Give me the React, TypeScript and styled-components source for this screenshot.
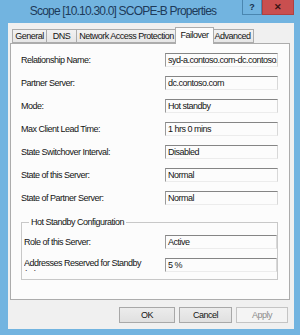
import React from 'react';
import styled, { createGlobalStyle } from 'styled-components';

const GlobalStyle = createGlobalStyle`
  html, body {
    margin: 0;
    padding: 0;
    background: #72b4e0;
  }
`;

const uiFont = `"Liberation Sans", Arial, sans-serif`;

const Window = styled.div`
  width: 300px;
  height: 335px;
  box-sizing: border-box;
  background: #72b4e0;
  display: flex;
  flex-direction: column;
  padding-bottom: 6px;
  font-family: ${uiFont};
`;

const TitleBar = styled.div`
  height: 23px;
  display: flex;
  align-items: flex-start;
  padding-right: 6px;
`;

const Title = styled.div`
  flex: 1;
  text-align: center;
  font-size: 12px;
  letter-spacing: -0.8px;
  line-height: 22px;
  color: #1d3a5a;
  padding-left: 4px;
`;

const CaptionButton = styled.div<{ $close?: boolean }>`
  width: ${(p) => (p.$close ? '32px' : '20px')};
  height: 15px;
  box-sizing: border-box;
  display: flex;
  align-items: center;
  justify-content: center;
  background: ${(p) => (p.$close ? '#c94f4f' : '#72b4e0')};
  border: 1px solid ${(p) => (p.$close ? '#b04040' : '#4a86b0')};
  border-top: none;
  color: ${(p) => (p.$close ? '#3a1414' : '#17304f')};
  font-size: 9px;
  font-weight: bold;
`;

const Client = styled.div`
  flex: 1;
  margin: 0 6px 0 8px;
  background: #f0f0f0;
  display: flex;
  flex-direction: column;
  padding-top: 4px;
  font-size: 9px;
  letter-spacing: -0.5px;
  color: #141414;
`;

const TabStrip = styled.div`
  display: flex;
  align-items: flex-end;
  height: 16px;
  padding-left: 4px;
  position: relative;
  z-index: 1;
`;

const Tab = styled.div<{ $w: number; $active?: boolean }>`
  width: ${(p) => p.$w}px;
  height: ${(p) => (p.$active ? '17px' : '14px')};
  box-sizing: border-box;
  border: 1px solid #acacac;
  border-bottom: ${(p) => (p.$active ? 'none' : '1px solid #acacac')};
  margin: ${(p) => (p.$active ? '0 -2px -1px -2px' : '0 0 0 -1px')};
  background: ${(p) => (p.$active ? '#fcfcfc' : 'linear-gradient(#f2f2f2, #e6e6e6)')};
  line-height: ${(p) => (p.$active ? '14px' : '12px')};
  text-align: center;
  white-space: nowrap;
  position: relative;
  z-index: ${(p) => (p.$active ? 2 : 0)};

  &:first-child {
    margin-left: 0;
  }
`;

const Panel = styled.div`
  margin-left: 2px;
  width: 280px;
  height: 257px;
  box-sizing: border-box;
  border: 1px solid #acacac;
  background: #fcfcfc;
  padding: 9px 11px 0 10px;
`;

const Row = styled.div`
  display: flex;
  align-items: center;
  height: 14px;
  margin-bottom: 9px;

  &:last-child {
    margin-bottom: 0;
  }
`;

const Label = styled.div<{ $w: number }>`
  width: ${(p) => p.$w}px;
  flex-shrink: 0;
  line-height: 12px;
  white-space: nowrap;
`;

const WrapLabel = styled(Label)`
  white-space: normal;
  height: 13px;
  line-height: 11px;
  overflow: hidden;
  align-self: flex-start;
  padding-right: 14px;
  box-sizing: border-box;
`;

const Field = styled.div`
  flex: 1;
  height: 14px;
  box-sizing: border-box;
  border-top: 1px solid #858585;
  border-left: 1px solid #9a9a9a;
  border-right: 1px solid #d8d8d8;
  border-bottom: 1px solid #ececec;
  padding-left: 2px;
  line-height: 12px;
  white-space: nowrap;
  overflow: hidden;
`;

const Group = styled.fieldset`
  margin: 11px 0 0 0;
  padding: 7px 0 7px 2px;
  border: 1px solid #c8c8c8;
  border-radius: 0;
  min-width: 0;
`;

const Legend = styled.legend`
  margin-left: 5px;
  padding: 0 2px;
  line-height: 12px;
`;

const Buttons = styled.div`
  display: flex;
  justify-content: flex-end;
  gap: 4px;
  margin-top: 7px;
  padding-right: 6px;
`;

const Button = styled.div<{ $w: number; $disabled?: boolean }>`
  width: ${(p) => p.$w}px;
  height: 16px;
  box-sizing: border-box;
  border: 1px solid ${(p) => (p.$disabled ? '#c4c4c4' : '#a8a8a8')};
  background: ${(p) => (p.$disabled ? '#f4f4f4' : 'linear-gradient(#ececec, #e0e0e0)')};
  color: ${(p) => (p.$disabled ? '#8c8c8c' : '#141414')};
  line-height: 14px;
  text-align: center;
`;

const rows = [
  ['Relationship Name:', 'syd-a.contoso.com-dc.contoso.com'],
  ['Partner Server:', 'dc.contoso.com'],
  ['Mode:', 'Hot standby'],
  ['Max Client Lead Time:', '1 hrs 0 mins'],
  ['State Switchover Interval:', 'Disabled'],
  ['State of this Server:', 'Normal'],
  ['State of Partner Server:', 'Normal'],
];

const tabs = [
  { name: 'General', w: 35 },
  { name: 'DNS', w: 31 },
  { name: 'Network Access Protection', w: 101 },
  { name: 'Failover', w: 39, active: true },
  { name: 'Advanced', w: 43 },
];

export default function App() {
  return (
    <>
      <GlobalStyle />
      <Window>
        <TitleBar>
          <Title>Scope [10.10.30.0] SCOPE-B Properties</Title>
          <CaptionButton>?</CaptionButton>
          <CaptionButton $close>✕</CaptionButton>
        </TitleBar>
        <Client>
          <TabStrip>
            {tabs.map((t) => (
              <Tab key={t.name} $w={t.w} $active={t.active}>
                {t.name}
              </Tab>
            ))}
          </TabStrip>
          <Panel>
            {rows.map(([label, value]) => (
              <Row key={label}>
                <Label $w={144}>{label}</Label>
                <Field>{value}</Field>
              </Row>
            ))}
            <Group>
              <Legend>Hot Standby Configuration</Legend>
              <Row>
                <Label $w={141}>Role of this Server:</Label>
                <Field>Active</Field>
              </Row>
              <Row>
                <WrapLabel $w={141}>Addresses Reserved for Standby (%):</WrapLabel>
                <Field>5 %</Field>
              </Row>
            </Group>
          </Panel>
          <Buttons>
            <Button $w={56}>OK</Button>
            <Button $w={53}>Cancel</Button>
            <Button $w={52} $disabled>
              Apply
            </Button>
          </Buttons>
        </Client>
      </Window>
    </>
  );
}
